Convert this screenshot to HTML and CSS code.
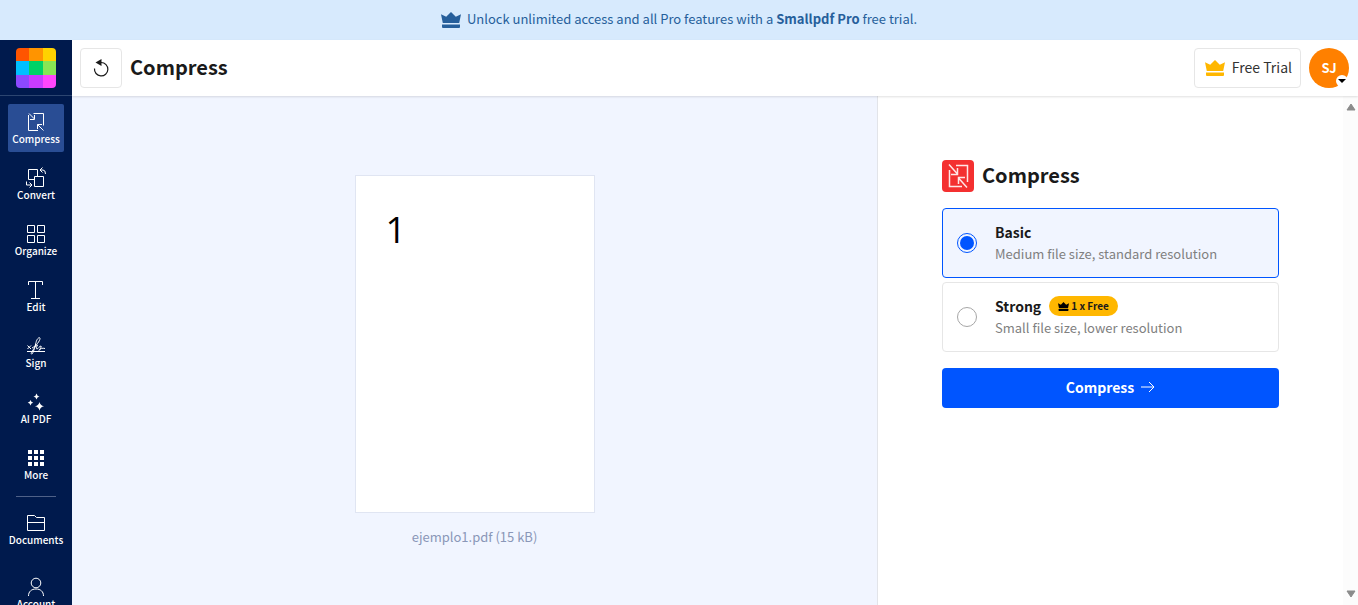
FILE: index.html
```html
<!DOCTYPE html>
<html lang="en">
<head>
<meta charset="utf-8">
<meta name="viewport" content="width=device-width, initial-scale=1">
<title>Compress</title>
<link rel="stylesheet" href="styles.css">
</head>
<body>
<svg class="defs" aria-hidden="true">
  <symbol id="crown" viewBox="0 0 20 16">
    <path d="M0 2.2 5.2 4.8 10 0l4.8 4.8L20 2.2 18.2 11H1.8z"/>
    <path d="M1 12.6h18V15a1 1 0 0 1-1 1H2a1 1 0 0 1-1-1z"/>
  </symbol>
  <symbol id="compress" viewBox="0 0 24 24">
    <path d="M9.500 3.500h10v12M4.500 5v15.500H14M5 3.500l5.500 5.500M10.500 5v4.500h-4.500M19.500 20.500l-6-6M13.500 19v-4.500h4.500"/>
  </symbol>
</svg>

<div class="banner">
  <svg class="banner-crown"><use href="#crown"/></svg>
  <p class="banner-text">Unlock unlimited access and all Pro features with a <strong>Smallpdf Pro</strong> free trial.</p>
</div>

<div class="app">
  <aside class="sidebar">
    <a class="brand" href="#" aria-label="Home">
      <svg class="logo" viewBox="0 0 40 40">
        <clipPath id="logo-shape"><rect width="40" height="40" rx="4"/></clipPath>
        <g clip-path="url(#logo-shape)">
          <rect width="13" height="13" fill="#ff5500"/><rect x="13" width="14" height="13" fill="#ff9400"/><rect x="27" width="13" height="13" fill="#ffd200"/>
          <rect y="13" width="13" height="14" fill="#00bfff"/><rect x="13" y="13" width="14" height="14" fill="#00d267"/><rect x="27" y="13" width="13" height="14" fill="#87e654"/>
          <rect y="27" width="13" height="13" fill="#8c49ff"/><rect x="13" y="27" width="14" height="13" fill="#c83cff"/><rect x="27" y="27" width="13" height="13" fill="#ff46fb"/>
        </g>
      </svg>
    </a>
    <nav class="nav">
      <a class="nav-item active" href="#"><svg class="icon"><use href="#compress"/></svg>Compress</a>
      <a class="nav-item" href="#"><svg class="icon" viewBox="0 0 24 24"><path d="M10.500 13.500h-6v-10h9v7M10.500 10.500h9v10h-9zM18.500 1.500 16 4l2.500 2.500M16 4h3q2.500 0 2.500 4M2.500 15.500v3.500h5M5.500 16.500 8 19l-2.500 2.500"/></svg>Convert</a>
      <a class="nav-item" href="#"><svg class="icon" viewBox="0 0 24 24"><path d="M3.500 3.500h7v7h-7zM13.500 3.500h7v7h-7zM3.500 13.500h7v7h-7zM13.500 13.500h7v7h-7z"/></svg>Organize</a>
      <a class="nav-item" href="#"><svg class="icon" viewBox="0 0 24 24"><path d="M4.500 7V3.500h14V7M11.500 3.500v17M7 20.500h9"/></svg>Edit</a>
      <a class="nav-item" href="#"><svg class="icon" viewBox="0 0 24 24"><path d="M3 17.500h18M3.500 11.500l3.500 3.500M7 11.500 3.500 15M8 14c4-2 8-7 8-9.500 0-2-3-.5-4 4-1 4-2 8-3.500 11-1 1.500-2 0-.5-2 2-3 4-6 5.500-6.500-1 2-1.500 4-.5 4s2.500-3 4-3c1 .5-1 3-2 4.500 1.500-2.500 3.500-2.500 6-2"/></svg>Sign</a>
      <a class="nav-item" href="#"><svg class="icon solid" viewBox="0 0 24 24"><path d="M12.500 3.500q.5 2.500 3 3-2.500.5-3 3-.5-2.500-3-3 2.500-.5 3-3zM6.500 10q.5 2.300 2.700 2.700Q7 13 6.500 15.500 6 13 3.700 12.700 6 12.300 6.500 10zM15.500 12q.7 3.500 4.500 4.300-3.800.7-4.500 4.500-.7-3.800-4.500-4.500 3.800-.8 4.500-4.300z"/></svg>AI PDF</a>
      <a class="nav-item" href="#"><svg class="icon solid" viewBox="0 0 24 24"><path d="M4 4h4v4H4zM10 4h4v4h-4zM16 4h4v4h-4zM4 10h4v4H4zM10 10h4v4h-4zM16 10h4v4h-4zM4 16h4v4H4zM10 16h4v4h-4zM16 16h4v4h-4z"/></svg>More</a>
    </nav>
    <hr class="nav-rule">
    <nav class="nav nav-lower">
      <a class="nav-item" href="#"><svg class="icon" viewBox="0 0 24 24"><path d="M3.500 4.500h7l2 2h8v13h-17zM3.500 11.500h17"/></svg>Documents</a>
      <a class="nav-item" href="#"><svg class="icon" viewBox="0 0 24 24"><circle cx="12" cy="8" r="4.800"/><path d="M4.500 21c0-4.500 3-7 7.500-7s7.500 2.500 7.500 7"/></svg>Account</a>
    </nav>
  </aside>

  <div class="main">
    <header class="topbar">
      <button class="undo" type="button" aria-label="Start over">
        <svg class="undo-icon" viewBox="0 0 20 20"><path d="M3.500 10.500A6.700 6.700 0 1 0 10.200 4.500H7" fill="none" stroke="#1a1a1a" stroke-width="1.200"/><path d="M4.500 4.500 10.500 1v7z" fill="#1a1a1a"/></svg>
      </button>
      <h1 class="title">Compress</h1>
      <button class="trial" type="button"><svg class="trial-crown"><use href="#crown"/></svg><span class="trial-label">Free Trial</span></button>
      <button class="avatar" type="button" aria-label="SJ account menu">SJ
        <span class="avatar-caret"><svg viewBox="0 0 8 4"><path d="M0 0h8L4 4z"/></svg></span>
      </button>
    </header>

    <div class="workspace">
      <main class="preview">
        <figure class="document">
          <div class="sheet">1</div>
          <figcaption class="caption">ejemplo1.pdf (15 kB)</figcaption>
        </figure>
      </main>

      <section class="panel">
        <form class="settings">
          <div class="panel-head">
            <svg class="panel-icon" viewBox="0 0 32 32"><rect width="32" height="32" rx="4" fill="#f43030"/><path d="M14 5.500h11.500V22M7.500 10v16.500H20M7 4.500l8.500 9.500M15.500 8v6.500H9M25 27.500 16.500 18M16.500 24v-6.500H23" fill="none" stroke="#ffe6e6" stroke-width="1.500"/></svg>
            <h2 class="title">Compress</h2>
          </div>
          <div class="options">
            <label class="option">
              <input class="radio" type="radio" name="level" checked>
              <span class="option-text">
                <span class="option-name">Basic</span>
                <span class="option-note">Medium file size, standard resolution</span>
              </span>
            </label>
            <label class="option">
              <input class="radio" type="radio" name="level">
              <span class="option-text">
                <span class="option-name">Strong <span class="badge"><svg class="badge-crown"><use href="#crown"/></svg>1 x Free</span></span>
                <span class="option-note">Small file size, lower resolution</span>
              </span>
            </label>
          </div>
          <button class="submit" type="button">Compress
            <svg class="submit-arrow" viewBox="0 0 14 12"><path d="M0 6h13M8 1l5 5-5 5"/></svg>
          </button>
        </form>
        <div class="scrollbar" aria-hidden="true">
          <svg class="scroll-arrow" viewBox="0 0 10 8"><path d="M5 1 9 7H1z"/></svg>
          <svg class="scroll-arrow" viewBox="0 0 10 8"><path d="M5 7 1 1h8z"/></svg>
        </div>
      </section>
    </div>
  </div>
</div>
</body>
</html>
```
FILE: styles.css
```css
* {
  box-sizing: border-box;
}

body {
  margin: 0;
  height: 100vh;
  display: flex;
  flex-direction: column;
  overflow: hidden;
  color: #1a1a1a;
  font-family: "Noto Sans CJK SC", "Noto Sans", sans-serif;
  font-size: 14px;
  line-height: 20px;
}

button {
  font-family: inherit;
  cursor: pointer;
}

h1, h2, p, figure {
  margin: 0;
}

.defs {
  position: absolute;
  width: 0;
  height: 0;
}

.banner {
  flex: none;
  height: 40px;
  display: flex;
  align-items: center;
  justify-content: center;
  gap: 6px;
  background: #d7eafd;
  color: #265f9b;
}

.banner-crown,
.trial-crown {
  width: 20px;
  height: 16px;
  fill: currentColor;
}

.banner-text {
  padding-bottom: 2px;
  font-size: 13px;
}

.app {
  flex: 1;
  min-height: 0;
  display: flex;
}

.sidebar {
  flex: none;
  width: 72px;
  overflow: hidden;
  background: #001a4d;
}

.brand {
  display: block;
  height: 56px;
  padding: 8px 16px;
  border-bottom: 1px solid #2c4570;
}

.logo {
  display: block;
  width: 40px;
  height: 40px;
}

.nav {
  display: flex;
  flex-direction: column;
  gap: 8px;
  padding: 8px;
}

.nav-lower {
  gap: 16px;
}

.nav-item {
  height: 48px;
  padding-top: 6px;
  display: flex;
  flex-direction: column;
  align-items: center;
  border-radius: 2px;
  color: #fff;
  font-size: 10px;
  font-weight: 500;
  line-height: 9px;
  text-decoration: none;
}

.nav-item.active {
  background: #294d94;
}

.icon {
  width: 24px;
  height: 24px;
  fill: none;
  stroke: #fff;
}

.icon.solid {
  fill: #fff;
  stroke: none;
}

.nav-rule {
  margin: 0 16px;
  border: 0;
  border-top: 1px solid #4f6188;
}

.main {
  flex: 1;
  min-width: 0;
  display: flex;
  flex-direction: column;
}

.topbar {
  position: relative;
  flex: none;
  height: 56px;
  display: flex;
  align-items: center;
  gap: 8px;
  padding: 8px 9px 8px 8px;
  background: #fff;
  box-shadow: 0 1px 2px rgba(0, 0, 0, 0.12);
}

.undo {
  width: 42px;
  height: 40px;
  display: grid;
  place-items: center;
  padding: 0;
  border: 1px solid #e6e6e6;
  border-radius: 4px;
  background: #fff;
}

.undo-icon {
  width: 20px;
  height: 20px;
}

.title {
  padding-bottom: 2px;
  font-size: 20px;
  font-weight: 700;
  line-height: 30px;
}

.trial {
  height: 40px;
  margin-left: auto;
  display: flex;
  align-items: center;
  gap: 7px;
  padding: 0 8px 0 10px;
  border: 1px solid #e6e6e6;
  border-radius: 4px;
  background: #fff;
  color: #333;
  font-size: 14px;
}

.trial-label {
  padding-bottom: 2px;
}

.trial-crown {
  color: #ffb700;
}

.avatar {
  position: relative;
  width: 40px;
  height: 40px;
  padding: 0 0 2px;
  border: 0;
  border-radius: 50%;
  background: #ff8000;
  color: #fff;
  font-size: 13px;
  font-weight: 700;
}

.avatar-caret {
  position: absolute;
  right: 1px;
  bottom: 1px;
  width: 12px;
  height: 12px;
  display: grid;
  place-items: center;
  border-radius: 50%;
  background: #fff;
}

.avatar-caret svg {
  width: 8px;
  height: 4px;
}

.workspace {
  flex: 1;
  min-height: 0;
  display: flex;
}

.preview {
  flex: 1;
  min-width: 0;
  display: flex;
  justify-content: center;
  padding: 80px 16px 0;
  background: #f1f5ff;
}

.document {
  width: 238px;
}

.sheet {
  aspect-ratio: 238 / 336;
  padding: 29px 30px;
  background: #fff;
  box-shadow: 0 0 0 1px #e0e5f2;
  color: #000;
  font-family: "Open Sans", sans-serif;
  font-size: 36px;
  line-height: 50px;
}

.caption {
  margin-top: 15px;
  color: #8a97b8;
  font-size: 13px;
  text-align: center;
}

.panel {
  flex: none;
  width: 481px;
  display: flex;
  background: #fff;
  border-left: 1px solid #e2e4e9;
}

.settings {
  flex: 1;
  padding: 64px 64px 0;
}

.panel-head {
  display: flex;
  align-items: center;
  gap: 8px;
}

.panel-icon {
  width: 32px;
  height: 32px;
}

.options {
  display: grid;
  gap: 4px;
  margin: 16px 0;
}

.option {
  height: 70px;
  display: flex;
  align-items: center;
  gap: 18px;
  padding: 0 14px;
  border: 1px solid #e6e6e6;
  border-radius: 4px;
}

.option:has(:checked) {
  border-color: #0055ff;
  background: #f1f5ff;
}

.radio {
  appearance: none;
  width: 20px;
  height: 20px;
  margin: 0;
  border: 1px solid #a6a6a6;
  border-radius: 50%;
  background: #fff;
}

.radio:checked {
  padding: 2px;
  border-color: #0055ff;
  background: #0055ff content-box;
}

.option-text {
  display: grid;
  gap: 2px;
}

.option-name {
  display: flex;
  align-items: center;
  gap: 8px;
  font-weight: 700;
}

.option-note {
  color: #808080;
  font-size: 13px;
}

.badge {
  height: 20px;
  display: flex;
  align-items: center;
  gap: 2px;
  padding: 0 9px;
  border-radius: 10px;
  background: #ffb700;
  font-size: 10px;
}

.badge-crown {
  width: 11px;
  height: 9px;
}

.submit {
  width: 100%;
  height: 40px;
  display: flex;
  align-items: center;
  justify-content: center;
  gap: 7px;
  padding: 0 0 2px;
  border: 0;
  border-radius: 4px;
  background: #0055ff;
  color: #fff;
  font-size: 14px;
  font-weight: 700;
}

.submit-arrow {
  width: 14px;
  height: 12px;
  fill: none;
  stroke: #fff;
}

.scrollbar {
  width: 15px;
  display: flex;
  flex-direction: column;
  align-items: center;
  justify-content: space-between;
  padding: 7px 0;
  background: #fcfcfc;
}

.scroll-arrow {
  width: 10px;
  height: 8px;
  fill: #8b8b8b;
  stroke: #8b8b8b;
  stroke-linejoin: round;
}
```
